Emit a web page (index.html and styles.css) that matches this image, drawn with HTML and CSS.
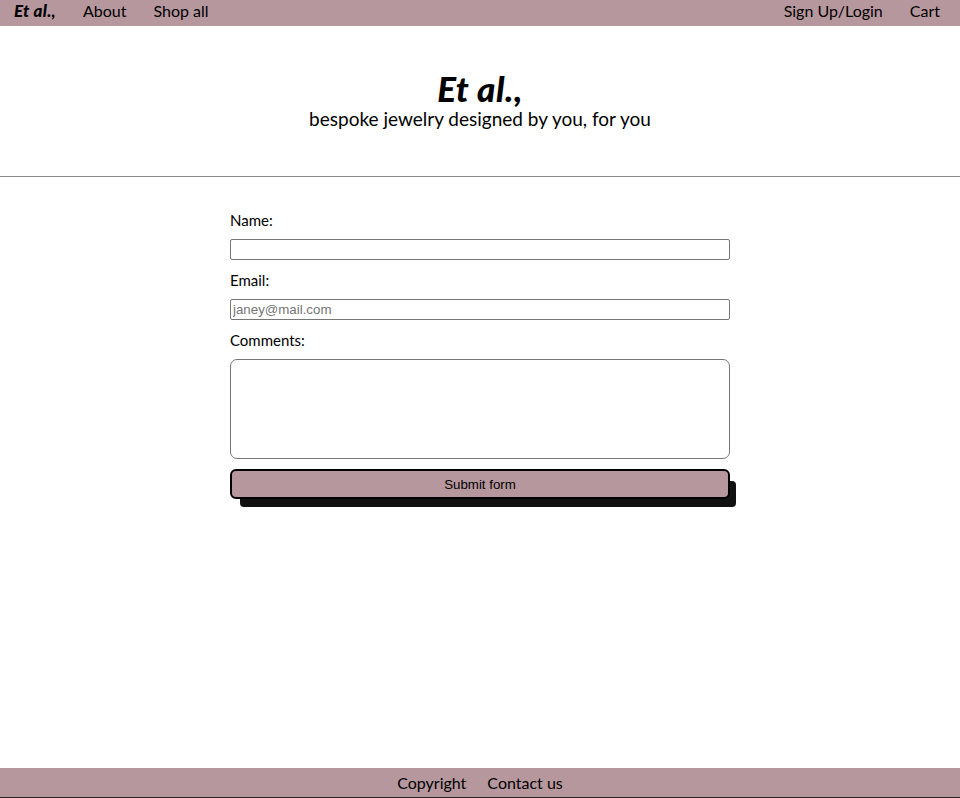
FILE: index.html
```html
<!DOCTYPE html>
<html lang="en">
<head>
<meta charset="utf-8">
<title>Et al., - Contact</title>
<link rel="stylesheet" href="styles.css">
</head>
<body>
<div class="page">
  <nav class="topnav">
    <div class="nav-left">
      <a class="brand" href="#">Et al.,</a>
      <a href="#">About</a>
      <a href="#">Shop all</a>
    </div>
    <div class="nav-right">
      <a href="#">Sign Up/Login</a>
      <a href="#">Cart</a>
    </div>
  </nav>
  <header class="hero">
    <h1 class="title">Et al.,</h1>
    <p class="tagline">bespoke jewelry designed by you, for you</p>
  </header>
  <hr class="divider">
  <main class="content">
    <form class="contact-form">
      <label class="field-label" for="name">Name:</label>
      <input class="text-input" id="name" type="text">
      <label class="field-label" for="email">Email:</label>
      <input class="text-input" id="email" type="email" placeholder="janey@mail.com">
      <label class="field-label" for="comments">Comments:</label>
      <textarea class="text-area" id="comments"></textarea>
      <button class="submit-btn" type="button">Submit form</button>
    </form>
  </main>
  <footer class="footer">
    <a href="#">Copyright</a>
    <a href="#">Contact us</a>
  </footer>
</div>
</body>
</html>
```
FILE: styles.css
```css
* { box-sizing: border-box; }
html, body { margin: 0; padding: 0; }
body {
  font-family: "Gill Sans", Lato, "Noto Sans", sans-serif;
  color: #000;
  background: #fff;
}
.page {
  min-height: 100vh;
  display: flex;
  flex-direction: column;
}
a { color: #000; text-decoration: none; }
.topnav {
  height: 26px;
  background: #b7979e;
  display: flex;
  justify-content: space-between;
  align-items: center;
  padding: 0 20px 4px 14px;
  font-size: 16px;
  line-height: 20px;
}
.nav-left, .nav-right {
  display: flex;
  gap: 25px;
  align-items: center;
}
.nav-left { gap: 27px; }
.nav-right { gap: 27px; }
.brand {
  font-weight: 900;
  font-style: italic;
  font-size: 17px;
  letter-spacing: 0.3px;
}
.hero {
  text-align: center;
  padding: 44px 0 44px;
}
.title {
  margin: 0;
  font-size: 35px;
  font-weight: 900;
  font-style: italic;
  line-height: 36px;
  letter-spacing: 0.5px;
}
.tagline {
  margin: 0;
  font-size: 19px;
  line-height: 26px;
}
.divider {
  margin: 0;
  border: 0;
  border-top: 1px solid #8a8a8a;
  height: 0;
}
.content {
  flex: 1;
  padding-top: 33px;
}
.contact-form {
  width: 500px;
  margin: 0 auto;
  display: flex;
  flex-direction: column;
}
.field-label {
  display: block;
  font-size: 15px;
  line-height: 20px;
  margin-bottom: 9px;
}
.text-input {
  height: 21px;
  width: 100%;
  border: 1px solid #767676;
  border-radius: 2px;
  padding: 1px 2px;
  font-family: "Liberation Sans", Arial, sans-serif;
  font-size: 13.3px;
  margin: 0 0 10px;
}
.text-input::placeholder { color: #757575; }
.text-area {
  height: 100px;
  width: 100%;
  border: 1px solid #767676;
  border-radius: 7px;
  resize: none;
  margin: 0 0 10px;
  font-family: "Liberation Sans", Arial, sans-serif;
}
.submit-btn {
  height: 30px;
  width: 100%;
  background: #b7979e;
  border: 2px solid #000;
  border-radius: 6px;
  box-shadow: 8px 10px 0 -2px #111;
  font-family: "Liberation Sans", Arial, sans-serif;
  font-size: 13.3px;
  color: #000;
  padding: 0;
}
.footer {
  height: 30px;
  background: #b7979e;
  border-bottom: 1px solid #222;
  display: flex;
  justify-content: center;
  align-items: center;
  gap: 21px;
  font-size: 16px;
}
```
